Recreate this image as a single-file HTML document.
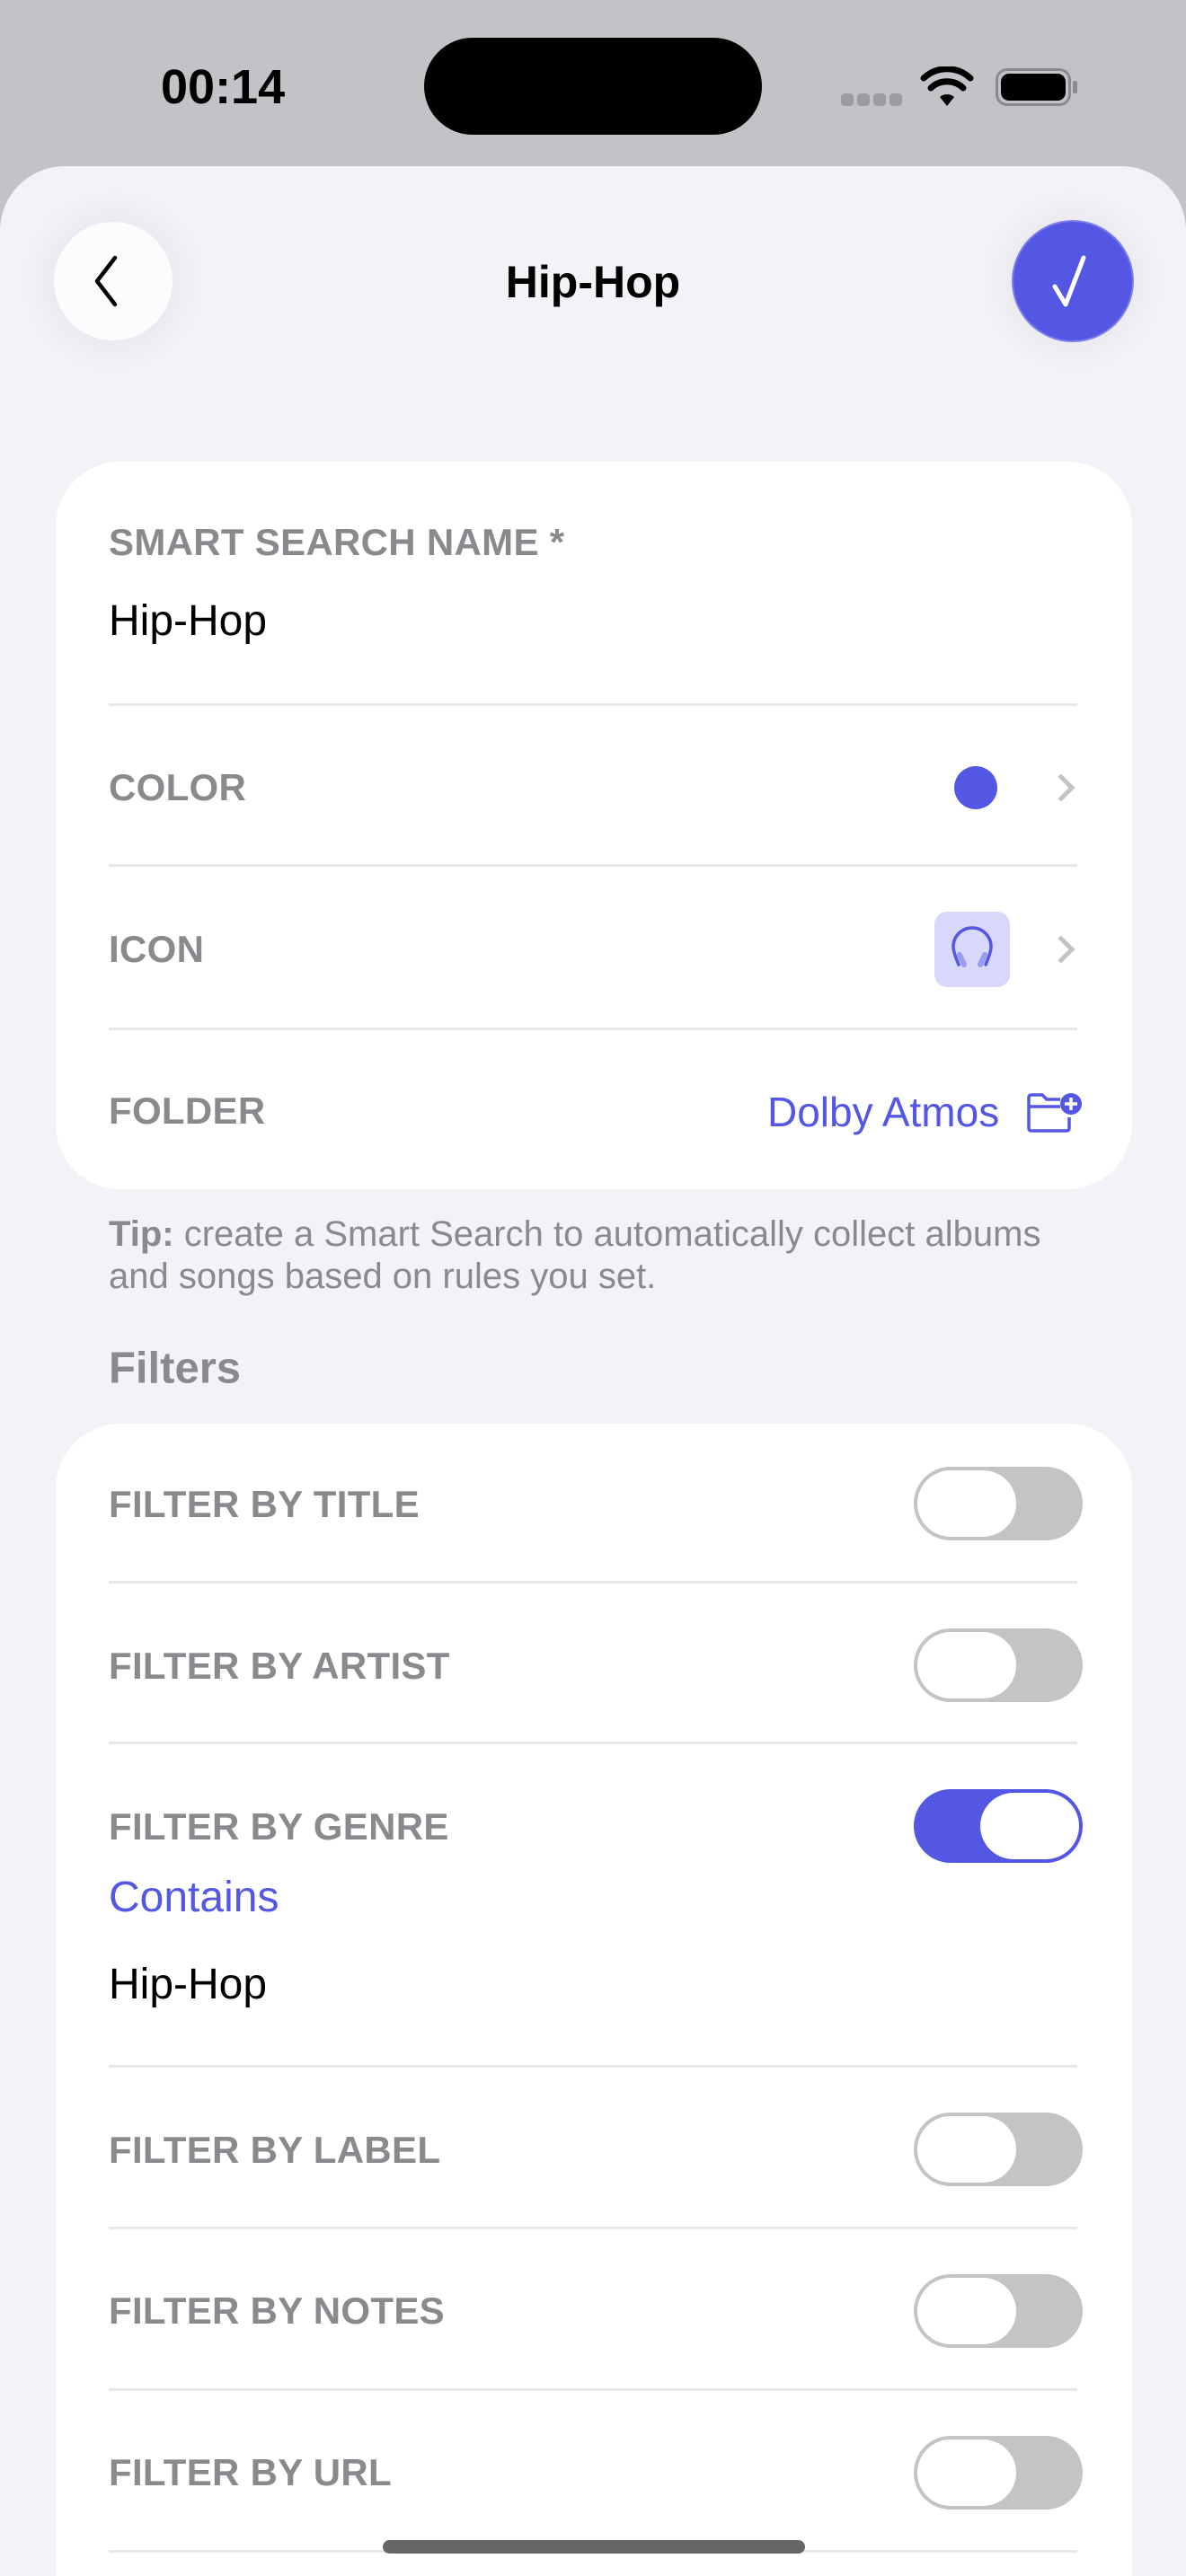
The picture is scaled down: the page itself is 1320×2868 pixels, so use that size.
<!DOCTYPE html>
<html><head><meta charset="utf-8"><style>
*{margin:0;padding:0;box-sizing:border-box}
html,body{width:1320px;height:2868px;overflow:hidden}
body{background:#c3c2c7;font-family:"Liberation Sans",sans-serif;position:relative}
.a{position:absolute}
.t{position:absolute;white-space:nowrap;line-height:1;transform:translateY(-50%)}
.sheet{left:0;top:185px;width:1320px;height:2683px;background:#f2f2f7;border-radius:72px 72px 0 0}
.card{background:#fff;border-radius:72px;left:62px;width:1198px}
.lbl{font-size:42px;font-weight:bold;color:#8a8a8e;left:121px;letter-spacing:0.3px}
.div{left:121px;width:1078px;height:3px;background:#e8e8ec}
.tog{left:1017px;width:188px;height:82px;border-radius:41px;background:#c4c4c6}
.tog::after{content:"";position:absolute;left:4px;top:4px;width:110px;height:74px;border-radius:37px;background:#fff}
.tog.on{background:#5457e3}
.tog.on::after{left:74px}
.chev{left:1170px;width:22px;height:22px;border-right:5px solid #c4c4c6;border-top:5px solid #c4c4c6;transform:rotate(45deg)}
</style></head><body>
<div class="t" style="left:179px;top:97px;font-size:54px;font-weight:bold;color:#000">00:14</div>
<div class="a" style="left:472px;top:42px;width:376px;height:108px;border-radius:54px;background:#000"></div>
<div class="a" style="left:936px;top:104px;width:14px;height:14px;border-radius:4px;background:#9c9ca0"></div>
<div class="a" style="left:954px;top:104px;width:14px;height:14px;border-radius:4px;background:#9c9ca0"></div>
<div class="a" style="left:972px;top:104px;width:14px;height:14px;border-radius:4px;background:#9c9ca0"></div>
<div class="a" style="left:990px;top:104px;width:14px;height:14px;border-radius:4px;background:#9c9ca0"></div>
<svg class="a" style="left:1024px;top:74px" width="60" height="46" viewBox="0 0 60 46"><path d="M30 44 L22 34 A12 12 0 0 1 38 34 Z" fill="#000"/><path d="M12 24 A26 26 0 0 1 48 24" stroke="#000" stroke-width="7" fill="none" stroke-linecap="round"/><path d="M4 13 A38 38 0 0 1 56 13" stroke="#000" stroke-width="7" fill="none" stroke-linecap="round"/></svg>
<div class="a" style="left:1108px;top:76px;width:84px;height:42px;border-radius:13px;border:3px solid #8a8a8e"></div>
<div class="a" style="left:1114px;top:82px;width:72px;height:30px;border-radius:9px;background:#000"></div>
<div class="a" style="left:1194px;top:90px;width:5px;height:14px;border-radius:2px;background:#8a8a8e"></div>

<div class="a sheet"></div>
<div class="a" style="left:26px;top:213px;width:200px;height:200px;border-radius:50%;background:radial-gradient(circle,#e6e6ea 30%,rgba(242,242,247,0) 70%)"></div>
<div class="a" style="left:1094px;top:213px;width:200px;height:200px;border-radius:50%;background:radial-gradient(circle,#e6e6ea 30%,rgba(242,242,247,0) 70%)"></div>
<div class="a" style="left:60px;top:247px;width:132px;height:132px;border-radius:50%;background:#fcfcfe"></div>
<svg class="a" style="left:100px;top:283px" width="40" height="60" viewBox="0 0 40 60"><path d="M28 4 L8 30 L28 56" stroke="#000" stroke-width="4.5" fill="none" stroke-linecap="round" stroke-linejoin="round"/></svg>
<div class="a" style="left:1128px;top:247px;width:132px;height:132px;border-radius:50%;background:#5457e3;box-shadow:0 0 0 2px #7c7fea"></div>
<svg class="a" style="left:1162px;top:283px" width="64" height="64" viewBox="0 0 64 64"><path d="M12 36 L24 56 L44 4" stroke="#fff" stroke-width="5" fill="none" stroke-linecap="round" stroke-linejoin="round"/></svg>
<div class="t" style="left:660px;top:314px;transform:translate(-50%,-50%);font-size:50px;font-weight:bold;color:#000">Hip-Hop</div>

<div class="a card" style="top:514px;height:810px"></div>
<div class="t lbl" style="top:604px">SMART SEARCH NAME *</div>
<div class="t" style="left:121px;top:692px;font-size:48px;color:#000">Hip-Hop</div>
<div class="a div" style="top:783px"></div>
<div class="t lbl" style="top:877px">COLOR</div>
<div class="a" style="left:1062px;top:853px;width:48px;height:48px;border-radius:50%;background:#5457e3"></div>
<div class="a chev" style="top:866px"></div>
<div class="a div" style="top:962px"></div>
<div class="t lbl" style="top:1057px">ICON</div>
<div class="a" style="left:1040px;top:1015px;width:84px;height:84px;border-radius:14px;background:#d8d8fa"></div>
<svg class="a" style="left:1058px;top:1030px" width="48" height="50" viewBox="0 0 48 50"><path d="M9 44 Q3 30 3 24 A21 21 0 0 1 45 24 Q45 30 39 44" stroke="#5457e3" stroke-width="3.5" fill="none" stroke-linecap="round"/><path d="M10 33 L15 44 M38 33 L33 44" stroke="#9a9cf0" stroke-width="6" stroke-linecap="round"/></svg>
<div class="a chev" style="top:1046px"></div>
<div class="a div" style="top:1144px"></div>
<div class="t lbl" style="top:1237px">FOLDER</div>
<div class="t" style="left:854px;top:1238px;font-size:46px;color:#5457e3">Dolby Atmos</div>
<svg class="a" style="left:1142px;top:1216px" width="64" height="46" viewBox="0 0 64 46"><path d="M48 28 V40 Q48 43 45 43 H6 Q3 43 3 40 V6 Q3 3 6 3 H18 L23 8 H38" stroke="#5457e3" stroke-width="3.5" fill="none" stroke-linejoin="round"/><path d="M3 16 H38" stroke="#5457e3" stroke-width="3.5"/><circle cx="50" cy="13" r="12" fill="#5457e3"/><path d="M50 6 V20 M43 13 H57" stroke="#fff" stroke-width="3.5"/></svg>

<div class="t" style="left:121px;top:1374px;font-size:40px;color:#8a8a8e"><b>Tip:</b> create a Smart Search to automatically collect albums</div>
<div class="t" style="left:121px;top:1421px;font-size:40px;color:#8a8a8e">and songs based on rules you set.</div>
<div class="t" style="left:121px;top:1524px;font-size:49px;font-weight:bold;color:#8a8a8e">Filters</div>

<div class="a card" style="top:1585px;height:1283px;border-radius:72px 72px 0 0"></div>
<div class="t lbl" style="top:1675px">FILTER BY TITLE</div>
<div class="a tog" style="top:1633px"></div>
<div class="a div" style="top:1760px"></div>
<div class="t lbl" style="top:1855px">FILTER BY ARTIST</div>
<div class="a tog" style="top:1813px"></div>
<div class="a div" style="top:1939px"></div>
<div class="t lbl" style="top:2034px">FILTER BY GENRE</div>
<div class="a tog on" style="top:1992px"></div>
<div class="t" style="left:121px;top:2113px;font-size:48px;color:#5457e3">Contains</div>
<div class="t" style="left:121px;top:2210px;font-size:48px;color:#000">Hip-Hop</div>
<div class="a div" style="top:2299px"></div>
<div class="t lbl" style="top:2394px">FILTER BY LABEL</div>
<div class="a tog" style="top:2352px"></div>
<div class="a div" style="top:2479px"></div>
<div class="t lbl" style="top:2573px">FILTER BY NOTES</div>
<div class="a tog" style="top:2532px"></div>
<div class="a div" style="top:2659px"></div>
<div class="t lbl" style="top:2753px">FILTER BY URL</div>
<div class="a tog" style="top:2712px"></div>
<div class="a div" style="top:2839px"></div>
<div class="a" style="left:426px;top:2828px;width:470px;height:15px;border-radius:8px;background:#666"></div>
</body></html>
